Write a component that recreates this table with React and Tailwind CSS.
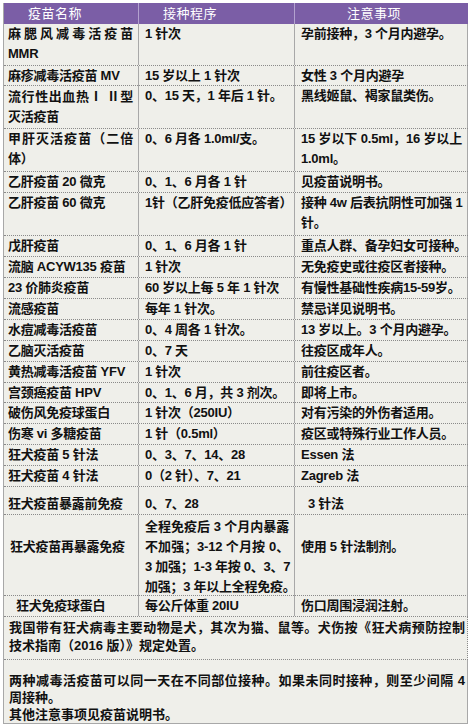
import clsx from "clsx";

const rows = [
  { h: "h-[42px]", cells: [{ lines: ["麻腮风减毒活疫苗", "MMR"] }, { lines: ["1 针次"] }, { lines: ["孕前接种，3 个月内避孕。"] }] },
  { h: "h-[20px]", cells: [{ lines: ["麻疹减毒活疫苗 MV"] }, { lines: ["15 岁以上 1 针次"] }, { lines: ["女性 3 个月内避孕"] }] },
  { h: "h-[43px]", cells: [{ lines: [<>流行性出血热<span className="font-['Noto_Sans_CJK_SC']">Ⅰ Ⅱ</span>型</>, "灭活疫苗"] }, { lines: ["0、15 天，1 年后 1 针。"] }, { lines: ["黑线姬鼠、褐家鼠类伤。"] }] },
  { h: "h-[43px]", cells: [{ lines: ["甲肝灭活疫苗（二倍", "体）"] }, { lines: ["0、6 月各 1.0ml/支。"] }, { lines: ["15 岁以下 0.5ml，16 岁以上", "1.0ml。"] }] },
  { h: "h-[21px]", cells: [{ lines: ["乙肝疫苗 20 微克"] }, { lines: ["0、1、6 月各 1 针"] }, { lines: ["见疫苗说明书。"] }] },
  { h: "h-[43px]", cells: [{ lines: ["乙肝疫苗 60 微克"] }, { lines: ["1针（乙肝免疫低应答者）"] }, { lines: ["接种 4w 后表抗阴性可加强 1", "针。"] }] },
  { h: "h-[21px]", cells: [{ lines: ["戊肝疫苗"] }, { lines: ["0、1、6 月各 1 针"] }, { lines: ["重点人群、备孕妇女可接种。"] }] },
  { h: "h-[21px]", cells: [{ lines: ["流脑 ACYW135 疫苗"] }, { lines: ["1 针次"] }, { lines: ["无免疫史或往疫区者接种。"] }] },
  { h: "h-[21px]", cells: [{ lines: ["23 价肺炎疫苗"] }, { lines: ["60 岁以上每 5 年 1 针次"] }, { lines: ["有慢性基础性疾病15-59岁。"] }] },
  { h: "h-[21px]", cells: [{ lines: ["流感疫苗"] }, { lines: ["每年 1 针次。"] }, { lines: ["禁忌详见说明书。"] }] },
  { h: "h-[21px]", cells: [{ lines: ["水痘减毒活疫苗"] }, { lines: ["0、4 周各 1 针次。"] }, { lines: ["13 岁以上。3 个月内避孕。"] }] },
  { h: "h-[21px]", cells: [{ lines: ["乙脑灭活疫苗"] }, { lines: ["0、7 天"] }, { lines: ["往疫区成年人。"] }] },
  { h: "h-[21px]", cells: [{ lines: ["黄热减毒活疫苗 YFV"] }, { lines: ["1 针次"] }, { lines: ["前往疫区者。"] }] },
  { h: "h-[20px]", cells: [{ lines: ["宫颈癌疫苗 HPV"] }, { lines: ["0、1、6 月，共 3 剂次。"] }, { lines: ["即将上市。"] }] },
  { h: "h-[21px]", cells: [{ lines: ["破伤风免疫球蛋白"] }, { lines: ["1 针次（250IU）"] }, { lines: ["对有污染的外伤者适用。"] }] },
  { h: "h-[21px]", cells: [{ lines: ["伤寒 vi 多糖疫苗"] }, { lines: ["1 针（0.5ml）"] }, { lines: ["疫区或特殊行业工作人员。"] }] },
  { h: "h-[21px]", cells: [{ lines: ["狂犬疫苗 5 针法"] }, { lines: ["0、3、7、14、28"] }, { lines: ["Essen 法"] }] },
  { h: "h-[21px]", cells: [{ lines: ["狂犬疫苗 4 针法"] }, { lines: ["0（2 针）、7、21"] }, { lines: ["Zagreb 法"] }] },
  {
    h: "h-[28px]",
    cells: [
      { lines: ["狂犬疫苗暴露前免疫"], cls: "flex flex-col justify-end" },
      { lines: ["0、7、28"], cls: "flex flex-col justify-end" },
      { lines: ["3 针法"], cls: "flex flex-col justify-end !pl-[13px]" },
    ],
  },
  {
    h: "h-[81px]",
    cells: [
      { lines: ["狂犬疫苗再暴露免疫"], cls: "pt-[22px] !pl-[6px]" },
      { lines: ["全程免疫后 3 个月内暴露", "不加强；3-12 个月按 0、", "3 加强；1-3 年按 0、3、7", "加强；3 年以上全程免疫。"], cls: "pt-[2px]" },
      { lines: ["使用 5 针法制剂。"], cls: "pt-[22px]" },
    ],
  },
  { h: "h-[21px]", cells: [{ lines: ["狂犬免疫球蛋白"], cls: "!pl-[12px]" }, { lines: ["每公斤体重 20IU"] }, { lines: ["伤口周围浸润注射。"] }] },
];

const pad = ["pl-[4px]", "pl-[6px]", "pl-[6px]"];

function Lines({ lines, edge = "pr-[5px]" }) {
  return lines.map((l, i) => (
    <div
      key={i}
      className={clsx("whitespace-nowrap", i < lines.length - 1 && ["text-justify [text-align-last:justify]", edge])}
    >
      {l}
    </div>
  ));
}

export default function App() {
  return (
    <div className="w-[471px] h-[728px] bg-white pt-[3px] pl-[3px] font-['Liberation_Sans','Noto_Sans_CJK_SC',sans-serif] text-[13px] leading-[20px] text-[#111]">
      <div className="w-[465px] border-l border-[#a8a8a8] bg-[#efefea]">
        <div className="grid grid-cols-[135px_156px_173px] h-[21px] bg-[#7b5ea6] text-white tracking-[0.5px] leading-[21px]">
          <div className="pl-[24px] border-r border-[#b3a2cf]">疫苗名称</div>
          <div className="pl-[24px] border-r border-[#b3a2cf]">接种程序</div>
          <div className="pl-[52px]">注意事项</div>
        </div>

        {rows.map((r, i) => (
          <div key={i} className={clsx("grid grid-cols-[135px_156px_173px] border-b border-dotted border-[#8a8a8a] font-bold tracking-[-0.25px]", r.h)}>
            {r.cells.map((c, j) => (
              <div key={j} className={clsx("border-r border-[#a8a8a8]", pad[j], c.cls)}>
                <Lines lines={c.lines} />
              </div>
            ))}
          </div>
        ))}

        <div className="h-[43px] border-b border-r border-dotted border-[#8a8a8a] pl-[5px] pt-[2px] leading-[18px] font-bold">
          <Lines edge="pr-[2px]" lines={["我国带有狂犬病毒主要动物是犬，其次为猫、鼠等。犬伤按《狂犬病预防控制", "技术指南（2016 版）》规定处置。"]} />
        </div>
        <div className="h-[64px] border-b border-r border-[#a8a8a8] flex flex-col justify-end pl-[5px] leading-[17px] font-bold">
          <Lines edge="pr-[2px]" lines={["两种减毒活疫苗可以同一天在不同部位接种。如果未同时接种，则至少间隔 4", "周接种。"]} />
          <div>其他注意事项见疫苗说明书。</div>
        </div>
      </div>
    </div>
  );
}
